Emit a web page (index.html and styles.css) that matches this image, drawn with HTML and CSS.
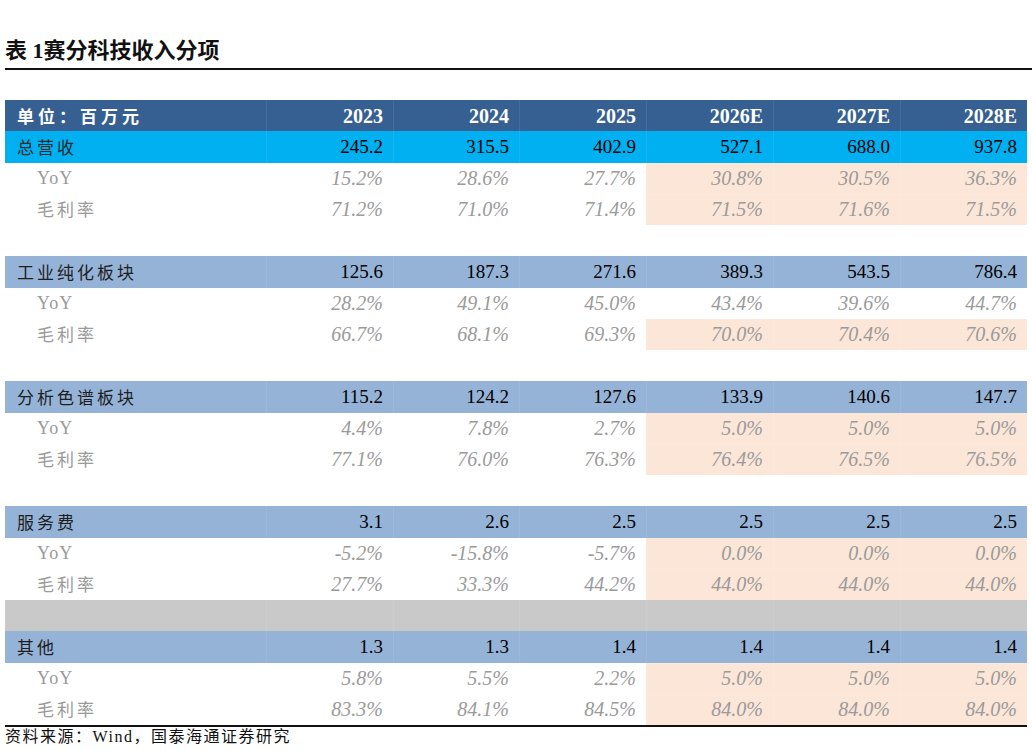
FILE: index.html
```html
<!DOCTYPE html>
<html lang="zh-CN">
<head>
<meta charset="utf-8">
<title>表 1赛分科技收入分项</title>
<link rel="stylesheet" href="styles.css">
</head>
<body>
<div class="page">
  <h1 class="title">表 1赛分科技收入分项</h1>
  <table class="rev">
    <colgroup>
      <col class="c-label"><col class="c-y"><col class="c-y2"><col class="c-y"><col class="c-y"><col class="c-y"><col class="c-y">
    </colgroup>
    <thead>
      <tr class="r-head">
        <th class="lbl">单位：百万元</th><th>2023</th><th>2024</th><th>2025</th><th>2026E</th><th>2027E</th><th>2028E</th>
      </tr>
    </thead>
    <tbody>
      <tr class="r-total"><td class="lbl">总营收</td><td>245.2</td><td>315.5</td><td>402.9</td><td>527.1</td><td>688.0</td><td>937.8</td></tr>
      <tr class="r-sub"><td class="lbl sub yoy">YoY</td><td>15.2%</td><td>28.6%</td><td>27.7%</td><td class="est">30.8%</td><td class="est">30.5%</td><td class="est">36.3%</td></tr>
      <tr class="r-sub"><td class="lbl sub">毛利率</td><td>71.2%</td><td>71.0%</td><td>71.4%</td><td class="est">71.5%</td><td class="est">71.6%</td><td class="est">71.5%</td></tr>
      <tr class="r-blank"><td colspan="7"></td></tr>

      <tr class="r-seg"><td class="lbl">工业纯化板块</td><td>125.6</td><td>187.3</td><td>271.6</td><td>389.3</td><td>543.5</td><td>786.4</td></tr>
      <tr class="r-sub"><td class="lbl sub yoy">YoY</td><td>28.2%</td><td>49.1%</td><td>45.0%</td><td>43.4%</td><td>39.6%</td><td>44.7%</td></tr>
      <tr class="r-sub"><td class="lbl sub">毛利率</td><td>66.7%</td><td>68.1%</td><td>69.3%</td><td class="est">70.0%</td><td class="est">70.4%</td><td class="est">70.6%</td></tr>
      <tr class="r-blank"><td colspan="7"></td></tr>

      <tr class="r-seg"><td class="lbl">分析色谱板块</td><td>115.2</td><td>124.2</td><td>127.6</td><td>133.9</td><td>140.6</td><td>147.7</td></tr>
      <tr class="r-sub"><td class="lbl sub yoy">YoY</td><td>4.4%</td><td>7.8%</td><td>2.7%</td><td class="est">5.0%</td><td class="est">5.0%</td><td class="est">5.0%</td></tr>
      <tr class="r-sub"><td class="lbl sub">毛利率</td><td>77.1%</td><td>76.0%</td><td>76.3%</td><td class="est">76.4%</td><td class="est">76.5%</td><td class="est">76.5%</td></tr>
      <tr class="r-blank"><td colspan="7"></td></tr>

      <tr class="r-seg"><td class="lbl">服务费</td><td>3.1</td><td>2.6</td><td>2.5</td><td>2.5</td><td>2.5</td><td>2.5</td></tr>
      <tr class="r-sub"><td class="lbl sub yoy">YoY</td><td>-5.2%</td><td>-15.8%</td><td>-5.7%</td><td class="est">0.0%</td><td class="est">0.0%</td><td class="est">0.0%</td></tr>
      <tr class="r-sub"><td class="lbl sub">毛利率</td><td>27.7%</td><td>33.3%</td><td>44.2%</td><td class="est">44.0%</td><td class="est">44.0%</td><td class="est">44.0%</td></tr>
      <tr class="r-grey"><td></td><td></td><td></td><td></td><td></td><td></td><td></td></tr>

      <tr class="r-seg"><td class="lbl">其他</td><td>1.3</td><td>1.3</td><td>1.4</td><td>1.4</td><td>1.4</td><td>1.4</td></tr>
      <tr class="r-sub"><td class="lbl sub yoy">YoY</td><td>5.8%</td><td>5.5%</td><td>2.2%</td><td class="est">5.0%</td><td class="est">5.0%</td><td class="est">5.0%</td></tr>
      <tr class="r-sub r-last"><td class="lbl sub">毛利率</td><td>83.3%</td><td>84.1%</td><td>84.5%</td><td class="est">84.0%</td><td class="est">84.0%</td><td class="est">84.0%</td></tr>
    </tbody>
  </table>
  <p class="source">资料来源：Wind，国泰海通证券研究</p>
</div>
</body>
</html>
```

FILE: styles.css
```css
html, body {
  margin: 0;
  padding: 0;
  background: #ffffff;
}

.page {
  padding: 0 0 0 5px;
  font-family: "Liberation Serif", "Noto Sans CJK SC", serif;
  color: #111111;
}

.title {
  margin: 0 0 30px 0;
  padding-top: 34px;
  height: 34px;
  line-height: 34px;
  font-size: 22px;
  font-weight: bold;
  color: #111111;
  border-bottom: 2px solid #111111;
  box-sizing: content-box;
}

.rev {
  border-collapse: collapse;
  border-spacing: 0;
  table-layout: fixed;
  width: 1022px;
}

.c-label { width: 261px; }
.c-y { width: 127px; }
.c-y2 { width: 126px; }

.rev tr {
  height: 31.25px;
}

.rev th,
.rev td {
  padding: 0 10px 0 0;
  height: 31.25px;
  text-align: right;
  vertical-align: middle;
  white-space: nowrap;
  line-height: 20px;
}

.rev .lbl {
  text-align: left;
  padding-left: 12px;
  font-family: "Noto Sans CJK SC", sans-serif;
  font-size: 17px;
  letter-spacing: 3px;
  font-weight: normal;
}

.rev .lbl.sub {
  padding-left: 32px;
  color: #9a9a9a;
}

.rev .lbl.yoy {
  font-family: "Liberation Serif", serif;
  font-size: 18px;
  letter-spacing: 1px;
}

/* header */
.r-head th {
  background: #376092;
  color: #ffffff;
  font-size: 20px;
  font-weight: bold;
  box-shadow: inset 1px 0 rgba(255, 255, 255, 0.08);
}

.r-head th.lbl {
  font-weight: bold;
  color: #ffffff;
  letter-spacing: 4px;
  box-shadow: none;
}

/* total row */
.r-total td {
  background: #00b0f0;
  font-size: 19px;
  color: #000000;
  box-shadow: inset 1px 0 rgba(255, 255, 255, 0.08);
}

.r-total td.lbl {
  color: #2a2a2a;
  box-shadow: none;
}

/* segment rows */
.r-seg td {
  background: #95b3d7;
  font-size: 19px;
  color: #000000;
  box-shadow: inset 1px 0 rgba(255, 255, 255, 0.08);
}

.r-seg td.lbl {
  color: #1e1e1e;
  box-shadow: none;
}

/* sub rows */
.r-sub td {
  font-size: 20px;
  font-style: italic;
  color: #9a9a9a;
}

.r-sub td.lbl {
  font-style: normal;
}

.r-sub td.est {
  background: #fbe6d8;
  box-shadow: inset 1px 1px rgba(255, 255, 255, 0.15);
}

.r-grey td {
  background: #c9c9c9;
  box-shadow: inset 1px 0 rgba(255, 255, 255, 0.08);
}

.r-last td {
  border-bottom: 2px solid #111111;
}

.source {
  margin: 0;
  font-size: 16px;
  line-height: 20px;
  letter-spacing: 1.5px;
  color: #111111;
  font-family: "Liberation Serif", "Noto Sans CJK SC", serif;
}
```
